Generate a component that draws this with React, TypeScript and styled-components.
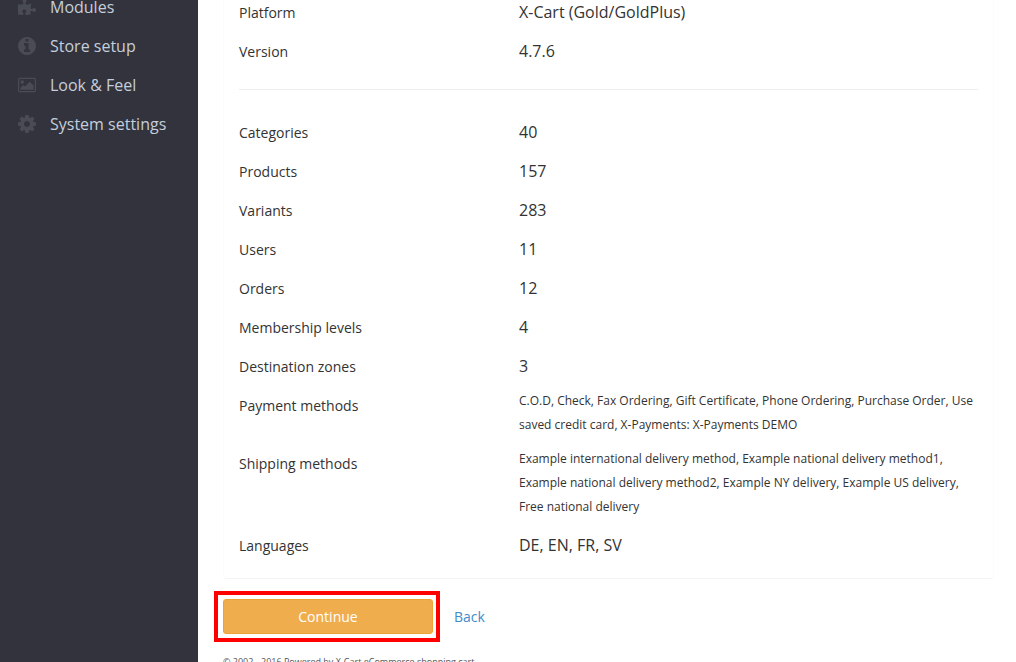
import React from "react";
import styled, { createGlobalStyle } from "styled-components";
import { FaPuzzlePiece } from "react-icons/fa";

const GlobalStyle = createGlobalStyle`
  * { box-sizing: border-box; }
  body {
    margin: 0;
    background: #fff;
    color: #333;
    font-family: "Open Sans", "Noto Sans", sans-serif;
    font-size: 14px;
    line-height: 24px;
  }
`;

const Page = styled.div`
  display: flex;
  height: 100vh;
  overflow: hidden;
`;

const Sidebar = styled.nav`
  flex: 0 0 198px;
  background: #33333d;
`;

const Menu = styled.ul`
  list-style: none;
  margin: -5px 0 0;
  padding: 0 0 0 18px;
  display: flex;
  flex-direction: column;
  gap: 15px;
`;

const MenuLink = styled.a`
  display: flex;
  align-items: center;
  gap: 14px;
  color: #c3cfdc;
  font-size: 16px;
  text-decoration: none;

  svg {
    width: 18px;
    height: 18px;
    color: #494c55;
    fill: currentColor;
  }
`;

const Main = styled.main`
  flex: 1;
  min-width: 0;
  padding: 0 22px 0 25px;
`;

const Panel = styled.section`
  padding: 0 15px 21px;
  border: 1px solid #fcfcfc;
  border-top: 0;
  border-bottom-color: #f4f4f4;
  border-radius: 0 0 4px 4px;
`;

const Details = styled.dl`
  margin: 0;
  display: flex;
  flex-direction: column;
  gap: 15px;
`;

const Divider = styled.hr`
  height: 1px;
  margin: 26px 0 30px;
  border: 0;
  background: #eee;
`;

const Row = styled.div`
  display: grid;
  grid-template-columns: 280px 1fr;
`;

const Term = styled.dt`
  padding-top: 1px;
  margin-bottom: -1px;
`;

const Value = styled.dd<{ $small?: boolean }>`
  margin: ${(p) => (p.$small ? "-4px 0 -1px" : "0")};
  font-size: ${(p) => (p.$small ? "12px" : "16px")};
`;

const Actions = styled.div`
  display: flex;
  align-items: center;
  gap: 14px;
  margin: 12px 0 0 -9px;
`;

const Highlight = styled.div`
  padding: 4px 3px 4px 5px;
  border: 4px solid #fe0000;
`;

const ContinueButton = styled.button`
  display: block;
  width: 210px;
  height: 35px;
  padding: 0;
  border: 1px solid #eea236;
  border-radius: 3px;
  background: #f0ad4e;
  color: #fff;
  font: inherit;
`;

const BackLink = styled.a`
  color: #428bca;
  text-decoration: none;
`;

const Footer = styled.footer`
  margin-top: 8px;
  color: #555;
  font-size: 9px;
`;

const InfoIcon = () => (
  <svg viewBox="128 128 1536 1536" aria-hidden="true">
    <path
      fillRule="evenodd"
      d="M1152 1376v-160q0-14-9-23t-23-9h-96v-512q0-14-9-23t-23-9h-320q-14 0-23 9t-9 23v160q0 14 9 23t23 9h96v320h-96q-14 0-23 9t-9 23v160q0 14 9 23t23 9h448q14 0 23-9t9-23zm-128-896v-160q0-14-9-23t-23-9h-192q-14 0-23 9t-9 23v160q0 14 9 23t23 9h192q14 0 23-9t9-23zm640 416q0 209-103 385.500t-279.500 279.500-385.500 103-385.500-103-279.500-279.500-103-385.500 103-385.500 279.500-279.500 385.500-103 385.500 103 279.500 279.500 103 385.500z"
    />
  </svg>
);

const ImageIcon = () => (
  <svg viewBox="-64 -64 1920 1920" aria-hidden="true">
    <path
      fillRule="evenodd"
      d="M576 576q0 80-56 136t-136 56-136-56-56-136 56-136 136-56 136 56 56 136zm1024 384v448h-1408v-192l320-320 160 160 512-512zm96-704h-1600q-13 0-22.500 9.500t-9.500 22.500v1216q0 13 9.500 22.500t22.500 9.500h1600q13 0 22.500-9.500t9.500-22.500v-1216q0-13-9.500-22.500t-22.500-9.500zm160 32v1216q0 66-47 113t-113 47h-1600q-66 0-113-47t-47-113v-1216q0-66 47-113t113-47h1600q66 0 113 47t47 113z"
    />
  </svg>
);

const CogIcon = () => (
  <svg viewBox="0 -128 1536 1536" aria-hidden="true">
    <path
      fillRule="evenodd"
      d="M1024 640q0 106-75 181t-181 75-181-75-75-181 75-181 181-75 181 75 75 181zm512-109v222q0 12-8 23t-20 13l-185 28q-19 54-39 91 35 50 107 138 10 12 10 25t-9 23q-27 37-99 108t-94 71q-12 0-26-9l-138-108q-44 23-91 38-16 136-29 186-7 28-36 28h-222q-14 0-24.500-8.500t-11.500-21.500l-28-184q-49-16-90-37l-141 107q-10 9-25 9-14 0-25-11-126-114-165-168-7-10-7-23 0-12 8-23 15-21 51-66.500t54-70.500q-27-50-41-99l-183-27q-13-2-21-12.500t-8-23.500v-222q0-12 8-23t19-13l186-28q14-46 39-92-40-57-107-138-10-12-10-24 0-10 9-23 26-36 98.500-107.500t94.500-71.500q13 0 26 10l138 107q44-23 91-38 16-136 29-186 7-28 36-28h222q14 0 24.500 8.500t11.500 21.500l28 184q49 16 90 37l142-107q9-9 24-9 13 0 25 10 129 119 165 170 7 8 7 22 0 12-8 23-15 21-51 66.500t-54 70.500q26 50 41 98l183 28q13 2 21 12.500t8 23.500z"
    />
  </svg>
);

const menu = [
  { label: "Modules", icon: <FaPuzzlePiece /> },
  { label: "Store setup", icon: <InfoIcon /> },
  { label: "Look & Feel", icon: <ImageIcon /> },
  { label: "System settings", icon: <CogIcon /> },
];

type Detail = { term: string; value: string; small?: boolean };

const source: Detail[] = [
  { term: "Platform", value: "X-Cart (Gold/GoldPlus)" },
  { term: "Version", value: "4.7.6" },
];

const contents: Detail[] = [
  { term: "Categories", value: "40" },
  { term: "Products", value: "157" },
  { term: "Variants", value: "283" },
  { term: "Users", value: "11" },
  { term: "Orders", value: "12" },
  { term: "Membership levels", value: "4" },
  { term: "Destination zones", value: "3" },
  {
    term: "Payment methods",
    value:
      "C.O.D, Check, Fax Ordering, Gift Certificate, Phone Ordering, Purchase Order, Use saved credit card, X-Payments: X-Payments DEMO",
    small: true,
  },
  {
    term: "Shipping methods",
    value:
      "Example international delivery method, Example national delivery method1, Example national delivery method2, Example NY delivery, Example US delivery, Free national delivery",
    small: true,
  },
  { term: "Languages", value: "DE, EN, FR, SV" },
];

const DetailList = ({ items }: { items: Detail[] }) => (
  <Details>
    {items.map((item) => (
      <Row key={item.term}>
        <Term>{item.term}</Term>
        <Value $small={item.small}>{item.value}</Value>
      </Row>
    ))}
  </Details>
);

export default function App() {
  return (
    <Page>
      <GlobalStyle />
      <Sidebar>
        <Menu>
          {menu.map((item) => (
            <li key={item.label}>
              <MenuLink href="#">
                {item.icon}
                {item.label}
              </MenuLink>
            </li>
          ))}
        </Menu>
      </Sidebar>
      <Main>
        <Panel>
          <DetailList items={source} />
          <Divider />
          <DetailList items={contents} />
        </Panel>
        <Actions>
          <Highlight>
            <ContinueButton type="button">Continue</ContinueButton>
          </Highlight>
          <BackLink href="#">Back</BackLink>
        </Actions>
        <Footer>© 2002 - 2016 Powered by X-Cart eCommerce shopping cart</Footer>
      </Main>
    </Page>
  );
}
